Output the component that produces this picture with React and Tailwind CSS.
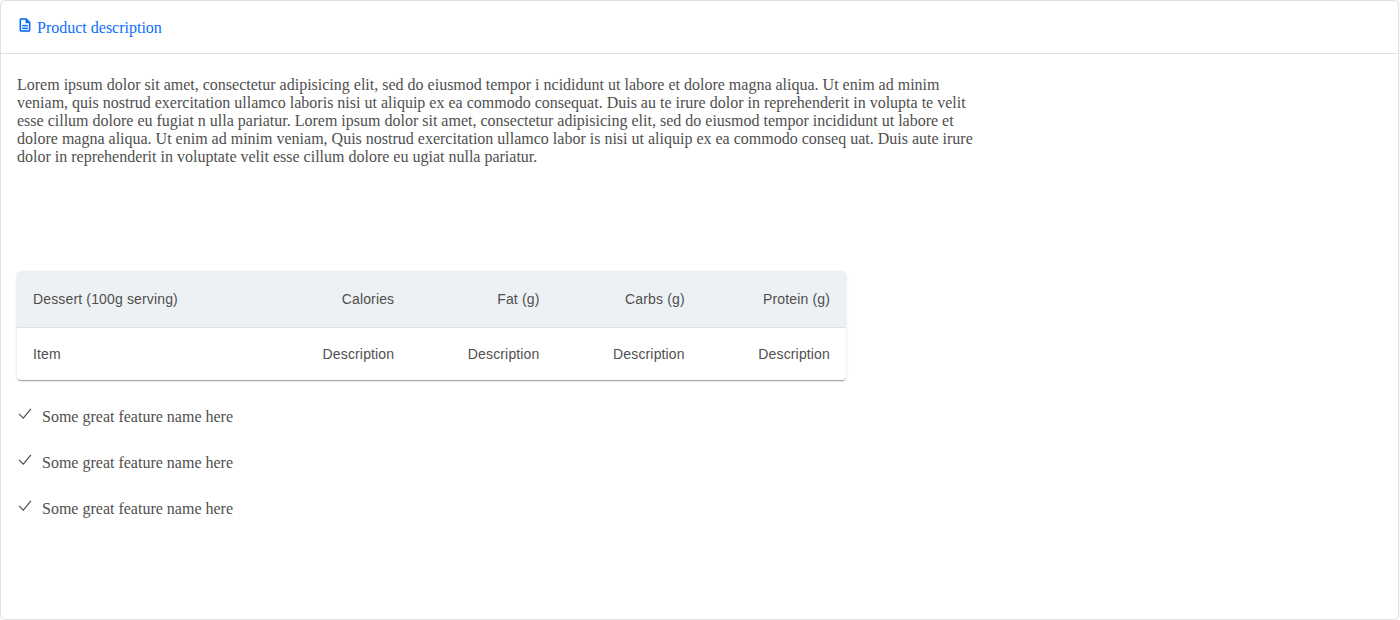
const features = [1, 2, 3];
const cols = ["Calories", "Fat (g)", "Carbs (g)", "Protein (g)"];
const lines = [
  "Lorem ipsum dolor sit amet, consectetur adipisicing elit, sed do eiusmod tempor i ncididunt ut labore et dolore magna aliqua. Ut enim ad minim",
  "veniam, quis nostrud exercitation ullamco laboris nisi ut aliquip ex ea commodo consequat. Duis au te irure dolor in reprehenderit in volupta te velit",
  "esse cillum dolore eu fugiat n ulla pariatur. Lorem ipsum dolor sit amet, consectetur adipisicing elit, sed do eiusmod tempor incididunt ut labore et",
  "dolore magna aliqua. Ut enim ad minim veniam, Quis nostrud exercitation ullamco labor is nisi ut aliquip ex ea commodo conseq uat. Duis aute irure",
  "dolor in reprehenderit in voluptate velit esse cillum dolore eu ugiat nulla pariatur.",
];

export default function App() {
  return (
    <div className="bg-[#f8f9fa]">
      <div className="h-[620px] w-[1399px] rounded-md border border-[#e0e0e0] bg-white font-['Liberation_Serif',serif] text-[16px] leading-[18px] text-[#4f4f4f]">
        <header className="flex h-[53px] items-center border-b border-[#e0e0e0] pl-4 pt-0.5 text-[#0d6efd]">
          <svg className="mb-1.5 size-4" viewBox="0 0 24 24" fill="currentColor" stroke="currentColor" strokeWidth="0.4">
            <path d="M8 16h8v2H8zm0-4h8v2H8zm6-10H6c-1.1 0-2 .9-2 2v16c0 1.1.89 2 1.99 2H18c1.1 0 2-.9 2-2V8l-6-6zm4 18H6V4h7v5h5v11z" />
          </svg>
          <h5 className="ml-1 text-[16px]">Product description</h5>
        </header>
        <main className="px-4 pt-[22px]">
          <p className="whitespace-nowrap">
            {lines.map((l) => (
              <span key={l} className="block">{l}</span>
            ))}
          </p>
          <table className="mt-[105px] w-[829px] table-fixed border-separate border-spacing-0 overflow-hidden rounded font-['Liberation_Sans',sans-serif] text-sm tracking-[0.15px] shadow-[0_2px_1px_-1px_rgba(0,0,0,0.2),0_1px_1px_rgba(0,0,0,0.14),0_1px_3px_rgba(0,0,0,0.12)]">
            <thead>
              <tr className="h-[57px] bg-[#edf1f4]">
                <th className="w-[248px] border-b border-[#e0e0e0] px-4 text-left font-normal">Dessert (100g serving)</th>
                {cols.map((c) => (
                  <th key={c} className="border-b border-[#e0e0e0] px-4 text-right font-normal">{c}</th>
                ))}
              </tr>
            </thead>
            <tbody>
              <tr className="h-[52px]">
                <td className="px-4">Item</td>
                {cols.map((c) => (
                  <td key={c} className="px-4 text-right">Description</td>
                ))}
              </tr>
            </tbody>
          </table>
          <ul className="mt-7 flex flex-col gap-7">
            {features.map((f) => (
              <li key={f} className="flex h-[18px] items-center">
                <svg className="mb-1.5 size-4" viewBox="0 0 16 16" fill="none" stroke="currentColor" strokeWidth="1.2">
                  <path d="M2 7.9l4.3 4.3L13.9 2.9" />
                </svg>
                <span className="ml-[9px]">Some great feature name here</span>
              </li>
            ))}
          </ul>
        </main>
      </div>
    </div>
  );
}
